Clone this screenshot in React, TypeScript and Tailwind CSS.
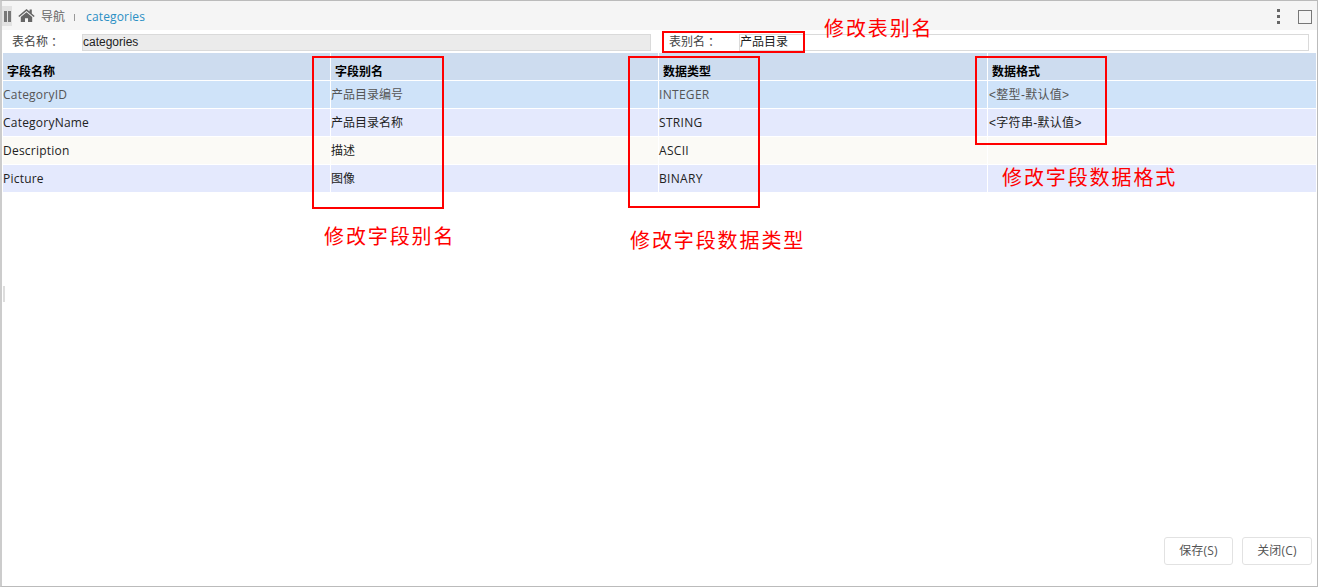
const rows = [
  { name: "CategoryID", alias: "产品目录编号", type: "INTEGER", format: "<整型-默认值>", bg: "bg-[#cfe3f9]", text: "text-[#555]" },
  { name: "CategoryName", alias: "产品目录名称", type: "STRING", format: "<字符串-默认值>", bg: "bg-[#e4e9fd]", text: "text-[#222]" },
  { name: "Description", alias: "描述", type: "ASCII", format: "", bg: "bg-[#fbfaf6]", text: "text-[#222]" },
  { name: "Picture", alias: "图像", type: "BINARY", format: "", bg: "bg-[#e4e9fd]", text: "text-[#222]" },
];

// offsets are from the padding box: page x - 2, page y - 1
const boxes = [
  "left-[660px] top-[30px] w-[143px] h-[22px]",
  "left-[310px] top-[55px] w-[132px] h-[153px]",
  "left-[626px] top-[55px] w-[132px] h-[152px]",
  "left-[973px] top-[55px] w-[132px] h-[89px]",
];

const notes = [
  { label: "修改表别名", pos: "left-[822px] top-[14px]" },
  { label: "修改字段别名", pos: "left-[322px] top-[222px]" },
  { label: "修改字段数据类型", pos: "left-[628px] top-[226px]" },
  { label: "修改字段数据格式", pos: "left-[1000px] top-[163px]" },
];

function HomeIcon() {
  return (
    <svg width="17" height="15" viewBox="0 0 17 14" fill="#666">
      <path d="M8.5 0.5 L0.3 7.4 L1.3 8.6 L8.5 2.6 L15.7 8.6 L16.7 7.4 L13.8 5 L13.8 1 L11.6 1 L11.6 3.1 Z" />
      <path d="M8.5 3.8 L2.8 8.5 L2.8 13.6 L7 13.6 L7 9.8 L10 9.8 L10 13.6 L14.2 13.6 L14.2 8.5 Z" />
    </svg>
  );
}

export default function App() {
  return (
    <div className="relative w-[1318px] h-[587px] overflow-hidden bg-white border border-[#bbb] border-l-[2px] border-l-[#ccc] text-[12px] font-['Open_Sans','Noto_Sans_CJK_SC',sans-serif]">
      {/* Toolbar */}
      <div className="flex items-center h-[29px] bg-[#f5f5f5]">
        <div className="flex items-center justify-center gap-[1px] w-[10px] h-[20px] mt-[1px] bg-[#e2e2e2]">
          <span className="w-[3px] h-[11px] bg-[#777]" />
          <span className="w-[3px] h-[11px] bg-[#777]" />
        </div>
        <div className="ml-[6px]">
          <HomeIcon />
        </div>
        <span className="ml-[6px] mt-[3px] text-[#666] leading-none">导航</span>
        <span className="ml-[9px] mt-[3px] w-px h-[7px] bg-[#999]" />
        <span className="ml-[11px] mt-[3px] tracking-[0.15px] text-[#2a8fc4] leading-none">categories</span>
        <div className="ml-auto flex flex-col gap-[3px] mr-[18px] mt-[1px]">
          <span className="w-[3px] h-[3px] bg-[#666]" />
          <span className="w-[3px] h-[3px] bg-[#666]" />
          <span className="w-[3px] h-[3px] bg-[#666]" />
        </div>
        <div className="w-[14px] h-[14px] mr-[5px] mt-[3px] border border-[#777]" />
      </div>

      {/* Table names */}
      <div className="flex items-center h-[23px] pt-[1px] text-[#444]">
        <span className="w-[80px] pl-[10px]">表名称<span className="ml-[3px]">：</span></span>
        <div className="flex items-center w-[569px] h-[17px] bg-[#ebebeb] border border-[#dadada] text-[#222] font-['Liberation_Sans','Noto_Sans_CJK_SC',sans-serif]">categories</div>
        <span className="w-[70px] ml-[18px]">表别名<span className="ml-[3px]">：</span></span>
        <div className="flex items-center flex-1 h-[17px] mr-[8px] bg-white border border-[#dadada] text-[#222]">产品目录</div>
      </div>

      {/* Field table */}
      <div className="ml-[1px] mr-[1px]">
        <div className="grid grid-cols-[327px_328px_329px_1fr] h-[28px] bg-[#cddcef] border-b border-white font-bold text-black">
          <div className="flex items-center pl-[4px] pt-[10px]">字段名称</div>
          <div className="flex items-center pl-[4px] pt-[10px] border-l border-white">字段别名</div>
          <div className="flex items-center pl-[4px] pt-[10px] border-l border-white">数据类型</div>
          <div className="flex items-center pl-[4px] pt-[10px] border-l border-white">数据格式</div>
        </div>
        {rows.map((r) => (
          <div key={r.name} className={`grid grid-cols-[327px_328px_329px_1fr] h-[28px] border-b border-white ${r.bg} ${r.text}`}>
            <div className="flex items-center tracking-[0.22px]">{r.name}</div>
            <div className="flex items-center border-l border-white">{r.alias}</div>
            <div className="flex items-center tracking-[0.3px] border-l border-white">{r.type}</div>
            <div className="flex items-center pl-[1px] tracking-[0.3px] border-l border-white font-['Liberation_Sans','Noto_Sans_CJK_SC',sans-serif]">{r.format}</div>
          </div>
        ))}
      </div>

      {/* Footer buttons */}
      <div className="absolute right-[5px] bottom-[21px] flex gap-[9px] text-[#555]">
        <button className="w-[69px] h-[28px] rounded-[3px] bg-white border border-[#e2e2e2] tracking-[0.2px]">保存(S)</button>
        <button className="w-[70px] h-[28px] rounded-[3px] bg-white border border-[#e2e2e2] tracking-[0.2px]">关闭(C)</button>
      </div>

      <div className="absolute left-[1px] top-[285px] w-[2px] h-[16px] bg-[#ddd]" />

      {/* Red annotations over the screenshot */}
      {boxes.map((b) => (
        <div key={b} className={`absolute border-2 border-[#f00] ${b}`} />
      ))}
      {notes.map((n) => (
        <span key={n.label} className={`absolute text-[20px] tracking-[1.9px] leading-[28px] text-[#f00] ${n.pos}`}>
          {n.label}
        </span>
      ))}
    </div>
  );
}
